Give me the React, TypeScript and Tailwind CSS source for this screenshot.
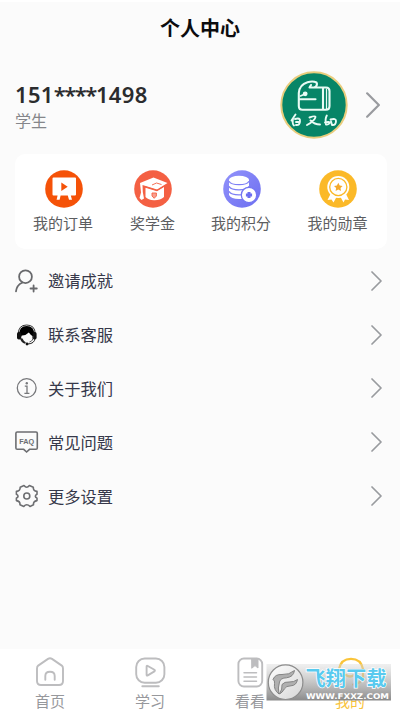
import React from 'react'

interface IconProp {
  className?: string;
}

interface Shortcut {
  title: string;
  icon: React.ReactNode;
  box: string;
}

interface MenuItem {
  title: string;
  icon: React.ReactNode;
}

const ChevronIcon: React.FC<IconProp> = ({ className }) => (
  <svg viewBox="0 0 12 20" className={className} fill="none" stroke="#999b9f" strokeWidth="1.7" strokeLinecap="round" strokeLinejoin="round">
    <path d="M1.5 1 L10.5 10 L1.5 19" />
  </svg>
)

const Avatar = () => (
  <svg viewBox="0 0 68 68" className="w-[68px] h-[68px]" fill="none" stroke="#e9fbf4" strokeLinecap="round" strokeLinejoin="round">
    <circle cx="34" cy="34" r="32.7" fill="#078567" stroke="#e9cd7d" strokeWidth="2" />
    <g strokeWidth="2.1">
      <path d="M35 16.5 H46 Q49.5 16.5 49.5 20 V35 Q49.5 38.8 46 38.8 H22.5 Q18.8 38.8 18.8 35 V22 Q19.5 13.5 27.5 11.2 Q33 9.7 36.5 11.5 Q38 14.5 34.5 16.5 H29.5 L31 14" />
      <path d="M19 28.3 H35.5 M43 17 V38" />
      <path d="M46.5 18 V38" strokeWidth="1.2" />
      <path d="M20.5 25 L25.5 22.8" strokeWidth="1.6" />
      <circle cx="25.2" cy="22.8" r="1.7" fill="#e9fbf4" strokeWidth="1.4" />
    </g>
    <g strokeWidth="1.9">
      <path d="M15.5 43.5 L11.5 49.5 M13 47.5 Q12 53 14 54.5 M15 48 Q20.5 46.5 20 50 Q20 54.5 16 54 M16 51 H18.5" />
      <path d="M29.5 46.5 Q35 44.5 35.5 45.8 Q35 49.5 27 54 M30.5 49.5 Q34.5 53.5 40 53.5" />
      <path d="M46.8 44.5 Q44.8 48 46 53.5 M45 51.5 Q50 50 49.3 52.5 Q48 54 46 53.5 M50.5 48.5 Q56 47 56 50 Q56 54.5 52 54 L51 50.5" />
    </g>
  </svg>
)

const OrderIcon = () => (
  <svg viewBox="0 0 38 38" className="w-[38px] h-[38px]">
    <circle cx="19" cy="19" r="18.8" fill="#f55208" />
    <path d="M8.5 7.5 H30 Q31 7.5 31 8.5 V24.5 Q31 25.5 30 25.5 H25.8 L27 29.7 H24 L22.8 25.5 H15.6 L14.6 29.7 H11.6 L12.6 25.5 H8.5 Q7.5 25.5 7.5 24.5 V8.5 Q7.5 7.5 8.5 7.5Z" fill="#fff" />
    <path d="M16.3 12.5 L22.7 16.8 L16.3 21Z" fill="#f55208" />
  </svg>
)

const ScholarIcon = () => (
  <svg viewBox="0 0 38 38" className="w-[38px] h-[38px]">
    <circle cx="19" cy="19" r="18.8" fill="#f46043" />
    <path d="M19.5 7.5 L33.5 13 L23 19.5 L8.5 15 L8.8 22 L10 28.5 L7.5 30 L5.5 28 L7 22.5 L6 13Z" fill="#fff" />
    <path d="M11.5 17.8 L23 21.2 L30 17 V27 Q26 30.4 20 30.2 Q14 30 11.5 27Z" fill="#fff" />
    <path d="M11 16.6 L23 20.4 L31 15.6 M18 15 L22.5 13 L27.5 14.5" fill="none" stroke="#f46043" strokeWidth="0.9" />
    <path d="M18 23 V26 L20.2 28.3 L22.4 26 V23Z" fill="#f9a08f" stroke="#f46043" strokeWidth="0.9" />
  </svg>
)

const PointIcon = () => (
  <svg viewBox="0 0 38 38" className="w-[38px] h-[38px]">
    <defs>
      <linearGradient id="point" x1="0" y1="0" x2="1" y2="1">
        <stop offset="0" stopColor="#9293fb" />
        <stop offset="1" stopColor="#6c6ef0" />
      </linearGradient>
    </defs>
    <circle cx="19" cy="19" r="18.8" fill="url(#point)" />
    <path d="M6 9.8 V25 Q8 29 16 29 H21 L26 20 V9.8Z" fill="#fff" />
    <ellipse cx="16" cy="9.8" rx="10" ry="4" fill="#fff" />
    <path d="M6 11.2 Q8 14.7 16 14.7 Q24 14.7 26 11.2 M6 16.4 Q8 19.9 16 19.9 Q24 19.9 26 16.4 M6 21.4 Q8 24.9 16 24.9 Q19 24.9 21 24" fill="none" stroke="#7d7ff5" strokeWidth="1.3" />
    <circle cx="26" cy="25" r="7.7" fill="#fff" stroke="#7476f3" strokeWidth="1.3" />
    <path d="M26 21.9 V28.1 M22.9 25 H29.1" stroke="#6c6ef0" strokeWidth="3" />
  </svg>
)

const MedalIcon = () => (
  <svg viewBox="0 0 38 38" className="w-[38px] h-[38px]">
    <circle cx="19" cy="19" r="18.8" fill="#fbb928" />
    <path d="M11.5 24 L8.5 30 L12.5 29.5 L14.5 32.5 L17.5 27 H21.5 L24.5 32.5 L26 29.5 L30 30 L27 24Z" fill="#fff" />
    <circle cx="19.3" cy="17" r="11" fill="#fff" />
    <circle cx="19.3" cy="17" r="8.6" fill="none" stroke="#fbb928" strokeWidth="1.3" />
    <path d="M19.3 12.8 L20.7 15.6 L23.6 16 L21.5 18 L22 21 L19.3 19.5 L16.6 21 L17.1 18 L15 16 L17.9 15.6Z" fill="#f4a92a" />
  </svg>
)

const InviteIcon = () => (
  <svg viewBox="0 0 24 24" className="w-6 h-6" fill="none" stroke="#68696c" strokeWidth="1.8" strokeLinecap="round">
    <circle cx="10.5" cy="7.7" r="6.4" />
    <path d="M1 22.3 Q1.8 16.3 7 13.8 M18.6 16.4 V22.6 M15.5 19.5 H21.8" />
  </svg>
)

const ServiceIcon = () => (
  <svg viewBox="0 0 24 24" className="w-6 h-6">
    <path d="M3.3 11 Q3.3 2 11.7 2 Q20.2 2 20.2 11" fill="none" stroke="#333" strokeWidth="1" />
    <path d="M4.3 12 Q3.8 3 11.7 3 Q19.6 3 19.2 12 L18.3 13.5 Q15 11.5 13.8 9.5 Q10.5 12.8 6.8 12.6 L5 16Z" fill="#000" />
    <rect x="2" y="9" width="4.2" height="7.5" rx="1.8" fill="#111" />
    <rect x="17.6" y="9" width="4" height="7.5" rx="1.8" fill="#111" />
    <path d="M18 13 Q18.5 18 14.5 19" fill="none" stroke="#444" strokeWidth="0.9" />
    <path d="M4.8 15 L7.5 15.5 Q8.5 18 10.8 19.3 L10 20.8 Q6 19.5 4.8 15Z" fill="#222" />
    <path d="M20 15.5 Q19.5 20.5 13 21" fill="none" stroke="#222" strokeWidth="1" />
    <circle cx="12" cy="21" r="1.4" fill="#111" />
  </svg>
)

const AboutIcon = () => (
  <svg viewBox="0 0 24 24" className="w-6 h-6" fill="none" stroke="#77787b" strokeWidth="1.3">
    <circle cx="11.7" cy="12" r="9.4" />
    <path d="M9.8 10.2 H12 V17 M9.4 17.3 H14.4" />
    <circle cx="11.8" cy="7.2" r="1.2" fill="#77787b" stroke="none" />
  </svg>
)

const FaqIcon = () => (
  <svg viewBox="0 0 24 24" className="w-6 h-6">
    <path d="M2.2 2 H21 Q22.3 2 22.3 3.3 V18 Q22.3 19.3 21 19.3 H14.5 L11.6 22 L8.7 19.3 H2.2 Q0.9 19.3 0.9 18 V3.3 Q0.9 2 2.2 2Z" fill="none" stroke="#6d6e71" strokeWidth="1.6" />
    <text x="11.7" y="13.6" textAnchor="middle" textLength="15" lengthAdjust="spacingAndGlyphs" fontSize="7.8" fontWeight="700" fontFamily="Liberation Sans, sans-serif" fill="#6d6e71">FAQ</text>
  </svg>
)

const SettingIcon = () => (
  <svg viewBox="0 0 24 24" className="w-6 h-6" fill="none" stroke="#6d6e71" strokeWidth="1.6" strokeLinejoin="round">
    <path d="M9 1.6 Q11.7 4.8 14.4 1.6 L18.3 3.2 Q18.1 7.1 22 7.4 V10.3 Q18.7 12 22 14.2 V16.6 Q18 17.2 18.5 20.8 L15 22.4 Q11.7 19.2 8.8 22.4 L5 20.8 Q5.3 17.2 1.4 16.6 V14.2 Q4.7 12 1.4 10.3 V7.4 Q5.3 7.1 5.2 3.2Z" />
    <circle cx="11.8" cy="12" r="3" />
  </svg>
)

const HomeIcon = () => (
  <svg viewBox="0 0 30 30" className="w-[30px] h-[30px]" fill="none" stroke="#bdbdbf" strokeWidth="1.9" strokeLinecap="round" strokeLinejoin="round">
    <path d="M13 1.9 Q15 0.7 17 1.9 L26.8 8.6 Q28 9.6 28 11.5 V24 Q28 28 24 28 H6 Q2 28 2 24 V11.5 Q2 9.6 3.2 8.6Z" />
    <path d="M10.3 22.8 V19 Q10.3 14.8 15 14.8 Q19.7 14.8 19.7 19 V22.8" />
  </svg>
)

const StudyIcon = () => (
  <svg viewBox="0 0 32 32" className="w-[32px] h-[32px]" fill="none" stroke="#bdbdbf" strokeWidth="1.9" strokeLinecap="round" strokeLinejoin="round">
    <rect x="2.2" y="1.5" width="28.2" height="24.2" rx="8.5" />
    <path d="M12.6 9.5 Q12.6 8.3 13.8 9 L20.4 12.8 Q21.4 13.6 20.4 14.4 L13.8 18.4 Q12.6 19 12.6 17.8Z M8.3 29.3 H24.8" />
  </svg>
)

const BookIcon = () => (
  <svg viewBox="0 0 30 32" className="w-[30px] h-[32px]" fill="none" stroke="#bdbdbf" strokeWidth="1.9" strokeLinecap="round" strokeLinejoin="round">
    <rect x="3.4" y="1.5" width="23.8" height="28" rx="5.5" />
    <path d="M17 2 H23 V11 L20 8.6 L17 11Z" fill="#bdbdbf" strokeWidth="1" />
    <path d="M9 15.8 H21.5 M9 20 H21.5 M9 24.2 H21.5" strokeWidth="1.5" />
  </svg>
)

const MineIcon = () => (
  <svg viewBox="0 0 30 32" className="w-[30px] h-[32px]" fill="none" stroke="#fac43a" strokeWidth="2.2" strokeLinecap="round">
    <path d="M4 12 Q6 1.8 16 1.8 Q26 1.8 28 12" />
    <path d="M4 13 V20 M28 13 V20 Q27 26 18 27.5" />
    <path d="M11 18 Q15 21 19 18" />
  </svg>
)

// site badge laid over the right end of the tab bar
const SiteBadge = () => (
  <svg viewBox="0 0 126 38" className="absolute left-[266px] top-[663px] w-[126px] h-[38px]">
    <defs>
      <linearGradient id="badge" x1="0" y1="0" x2="0" y2="1">
        <stop offset="0" stopColor="#d8d8d8" stopOpacity="0.4" />
        <stop offset="0.45" stopColor="#b8b8b8" stopOpacity="0.75" />
        <stop offset="1" stopColor="#858585" stopOpacity="0.96" />
      </linearGradient>
      <linearGradient id="disc" x1="0" y1="0" x2="1" y2="1">
        <stop offset="0" stopColor="#ffffff" />
        <stop offset="1" stopColor="#d6d6d6" />
      </linearGradient>
    </defs>
    <rect x="0.5" y="1" width="124.5" height="36.5" fill="url(#badge)" />
    <circle cx="19.6" cy="19.2" r="17.3" fill="url(#disc)" stroke="#8c8c8c" strokeWidth="1.2" />
    <path d="M7 16.5 Q9 11 16 11.5 Q23 12 28.5 7.5 Q27.5 14 20.5 14.8 Q14.5 15 13.5 19 Q11.5 25 13 31 Q7.5 27 8.5 20.5 Q9 17.5 7 16.5Z M16 21.5 Q18.5 18.5 23 19 Q28 19.3 31.5 16.5 Q30.5 22.5 25 22.8 Q20 22.8 18.3 26 Q16.5 29.5 13.5 31 Q16.5 26 16 21.5Z" fill="#b0b0b0" stroke="#7c7c7c" strokeWidth="0.9" />
    <text x="39.5" y="23.4" textLength="81" fontSize="20" fontWeight="700" fontFamily="'Noto Sans CJK SC', sans-serif" fill="#58caef" stroke="#ffffff" strokeWidth="1.4" paintOrder="stroke">飞翔下载</text>
    <text x="40" y="35.6" textLength="83" lengthAdjust="spacingAndGlyphs" fontSize="7.8" fontWeight="700" fontFamily="'DejaVu Sans', sans-serif" fill="#ffffff">WWW.FXXZ.COM</text>
  </svg>
)

const shortcuts: Shortcut[] = [
  { title: '我的订单', icon: <OrderIcon />, box: 'w-[97px]' },
  { title: '奖学金', icon: <ScholarIcon />, box: 'w-[82px]' },
  { title: '我的积分', icon: <PointIcon />, box: 'w-[95px]' },
  { title: '我的勋章', icon: <MedalIcon />, box: 'w-[98px]' },
]

const menus: MenuItem[] = [
  { title: '邀请成就', icon: <InviteIcon /> },
  { title: '联系客服', icon: <ServiceIcon /> },
  { title: '关于我们', icon: <AboutIcon /> },
  { title: '常见问题', icon: <FaqIcon /> },
  { title: '更多设置', icon: <SettingIcon /> },
]

const tabs = [
  { title: '首页', icon: <HomeIcon />, color: 'text-[#97989c]' },
  { title: '学习', icon: <StudyIcon />, color: 'text-[#97989c]' },
  { title: '看看', icon: <BookIcon />, color: 'text-[#97989c]' },
  { title: '我的', icon: <MineIcon />, color: 'text-[#f9c33c]' },
]

const App: React.FC = () => {
  return (
    <div className="relative w-[400px] h-[711px] flex flex-col overflow-hidden bg-[#fbfbfb] font-['Noto_Sans_CJK_SC',sans-serif]">
      <header className="h-[58px] shrink-0 border-t-2 border-white text-center">
        <h1 className="pt-[13px] text-[20px] leading-[26px] font-bold text-[#0c0c0e]">个人中心</h1>
      </header>

      <section className="h-[96px] shrink-0 pl-[15px] pr-[19px] flex items-start">
        <div className="flex-1 pt-[22px]">
          <p className="font-['Noto_Sans'] font-semibold text-[22px] leading-[28px] tracking-[0.35px] text-[#2b2c2e]">
            151<span className="tracking-[-1.5px]">****</span>1498
          </p>
          <p className="text-[16px] leading-[24px] text-[#85868a]">学生</p>
        </div>
        <div className="pt-[13px] flex items-center">
          <Avatar />
          <ChevronIcon className="ml-[17px] w-[16px] h-[26px]" />
        </div>
      </section>

      <section className="h-[95px] shrink-0 ml-[15px] w-[372px] rounded-[10px] bg-white flex">
        {
          shortcuts.map((item) => (
            <div key={item.title} className={item.box + ' pt-[16px] flex flex-col items-center'}>
              {item.icon}
              <span className="mt-[3px] -ml-px text-[15px] leading-[24px] text-[#5c5d60] whitespace-nowrap">{item.title}</span>
            </div>
          ))
        }
      </section>

      <ul className="pt-[5px] flex-1">
        {
          menus.map((item) => (
            <li key={item.title} className="h-[53.8px] pl-[15px] pr-[17px] flex items-center">
              {item.icon}
              <span className="flex-1 pl-[9px] pb-px text-[16.3px] leading-[24px] text-[#36384a]">{item.title}</span>
              <ChevronIcon className="w-[13px] h-[20px]" />
            </li>
          ))
        }
      </ul>

      <nav className="h-[62px] shrink-0 bg-white flex">
        {
          tabs.map((item) => (
            <div key={item.title} className={item.color + ' w-[100px] pt-[8px] flex flex-col items-center'}>
              <div className="h-[32px] shrink-0">{item.icon}</div>
              <span className="shrink-0 text-[15px] leading-[24px]">{item.title}</span>
            </div>
          ))
        }
      </nav>
      <SiteBadge />
    </div>
  )
}

export default App
